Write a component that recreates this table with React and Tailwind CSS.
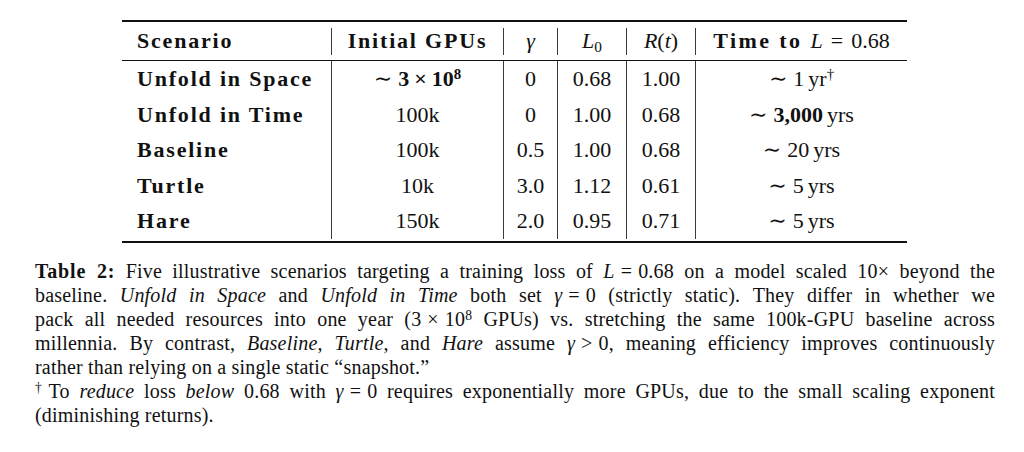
export default function App() {
  const sep = "border-l border-[#3a3a3a]";
  const B = ({ children }) => (
    <span className="font-bold tracking-[1.8px]">{children}</span>
  );
  const Sup = ({ children }) => (
    <span className="relative -top-[0.45em] text-[0.68em] leading-none">{children}</span>
  );
  const Sub = ({ children }) => (
    <span className="relative top-[0.28em] text-[0.7em] leading-none">{children}</span>
  );
  const Op = ({ children }) => <span className="mx-[6px]">{children}</span>;
  const Tilde = () => <span className="mr-[6px]">∼</span>;
  const rows = [
    {
      name: "Unfold in Space",
      gpus: (
        <>
          <Tilde />
          <span className="font-bold">
            3<span className="mx-[5px]">×</span>10<Sup>8</Sup>
          </span>
        </>
      ),
      g: "0",
      l: "0.68",
      r: "1.00",
      t: (
        <>
          <Tilde />1<span className="ml-[4px]">yr</span>
          <Sup>†</Sup>
        </>
      ),
    },
    {
      name: "Unfold in Time",
      gpus: "100k",
      g: "0",
      l: "1.00",
      r: "0.68",
      t: (
        <>
          <Tilde />
          <span className="font-bold">3,000</span>
          <span className="ml-[4px]">yrs</span>
        </>
      ),
    },
    {
      name: "Baseline",
      gpus: "100k",
      g: "0.5",
      l: "1.00",
      r: "0.68",
      t: (
        <>
          <Tilde />20<span className="ml-[4px]">yrs</span>
        </>
      ),
    },
    {
      name: "Turtle",
      gpus: "10k",
      g: "3.0",
      l: "1.12",
      r: "0.61",
      t: (
        <>
          <Tilde />5<span className="ml-[4px]">yrs</span>
        </>
      ),
    },
    {
      name: "Hare",
      gpus: "150k",
      g: "2.0",
      l: "0.95",
      r: "0.71",
      t: (
        <>
          <Tilde />5<span className="ml-[4px]">yrs</span>
        </>
      ),
    },
  ];

  const HeadCell = ({ first, children }) => (
    <div className="flex items-start">
      {!first && <div className="mt-[6px] h-[27px] w-px bg-[#3a3a3a]" />}
      <div className={first ? "pl-[15px]" : "flex-1 text-center whitespace-nowrap"}>{children}</div>
    </div>
  );

  const J = "text-justify [text-align-last:justify]";

  return (
    <div className="w-[1024px] h-[452px] overflow-hidden bg-white text-[#111] font-['Liberation_Serif','DejaVu_Serif',serif]">
      <div className="pt-[20px]">
        <div className="ml-[122px] w-[785px] text-[22px]">
          <div className="h-[2px] bg-[#111]" />
          <div className="grid grid-cols-[209px_172px_54px_69px_69px_212px] h-[38px] leading-[38px]">
            <HeadCell first>
              <B>Scenario</B>
            </HeadCell>
            <HeadCell>
              <B>Initial GPUs</B>
            </HeadCell>
            <HeadCell>
              <i>γ</i>
            </HeadCell>
            <HeadCell>
              <i>L</i>
              <Sub>0</Sub>
            </HeadCell>
            <HeadCell>
              <i>R</i>(<i>t</i>)
            </HeadCell>
            <HeadCell>
              <span className="font-bold tracking-[2.4px]">Time to</span>
              <i className="ml-[8px]">L</i>
              <span className="mx-[8px]">=</span>0.68
            </HeadCell>
          </div>
          <div className="h-px bg-[#111]" />
          <div className="pb-[2px]">
            {rows.map((r) => (
              <div
                key={r.name}
                className="grid grid-cols-[209px_172px_54px_69px_69px_212px] h-[35.5px] leading-[35.5px]"
              >
                <div className="pl-[15px] whitespace-nowrap">
                  <B>{r.name}</B>
                </div>
                <div className={`${sep} text-center whitespace-nowrap`}>{r.gpus}</div>
                <div className={`${sep} text-center`}>{r.g}</div>
                <div className={`${sep} text-center`}>{r.l}</div>
                <div className={`${sep} text-center`}>{r.r}</div>
                <div className={`${sep} text-center whitespace-nowrap`}>{r.t}</div>
              </div>
            ))}
          </div>
          <div className="h-[2px] bg-[#111]" />
        </div>

        <div className="ml-[35px] mt-[16.5px] w-[960px] text-[20px] leading-[24px] tracking-[0.2px]">
          <div className={J}>
            <span className="font-bold tracking-[0.8px]">Table 2:</span> Five illustrative scenarios
            targeting a training loss of <i>L</i>
            <Op>=</Op>0.68 on a model scaled 10× beyond the
          </div>
          <div className={J}>
            baseline. <i>Unfold in Space</i> and <i>Unfold in Time</i> both set <i>γ</i>
            <Op>=</Op>0 (strictly static). They differ in whether we
          </div>
          <div className={J}>
            pack all needed resources into one year (3<Op>×</Op>10<Sup>8</Sup> GPUs) vs. stretching the
            same 100k-GPU baseline across
          </div>
          <div className={J}>
            millennia. By contrast, <i>Baseline, Turtle,</i> and <i>Hare</i> assume <i>γ</i>
            <Op>&gt;</Op>0, meaning efficiency improves continuously
          </div>
          <div>rather than relying on a single static “snapshot.”</div>
          <div className={J}>
            <Sup>†</Sup>
            <span className="ml-[2px]">To</span> <i>reduce</i> loss <i>below</i> 0.68 with <i>γ</i>
            <Op>=</Op>0 requires exponentially more GPUs, due to the small scaling exponent
          </div>
          <div>(diminishing returns).</div>
        </div>
      </div>
    </div>
  );
}
